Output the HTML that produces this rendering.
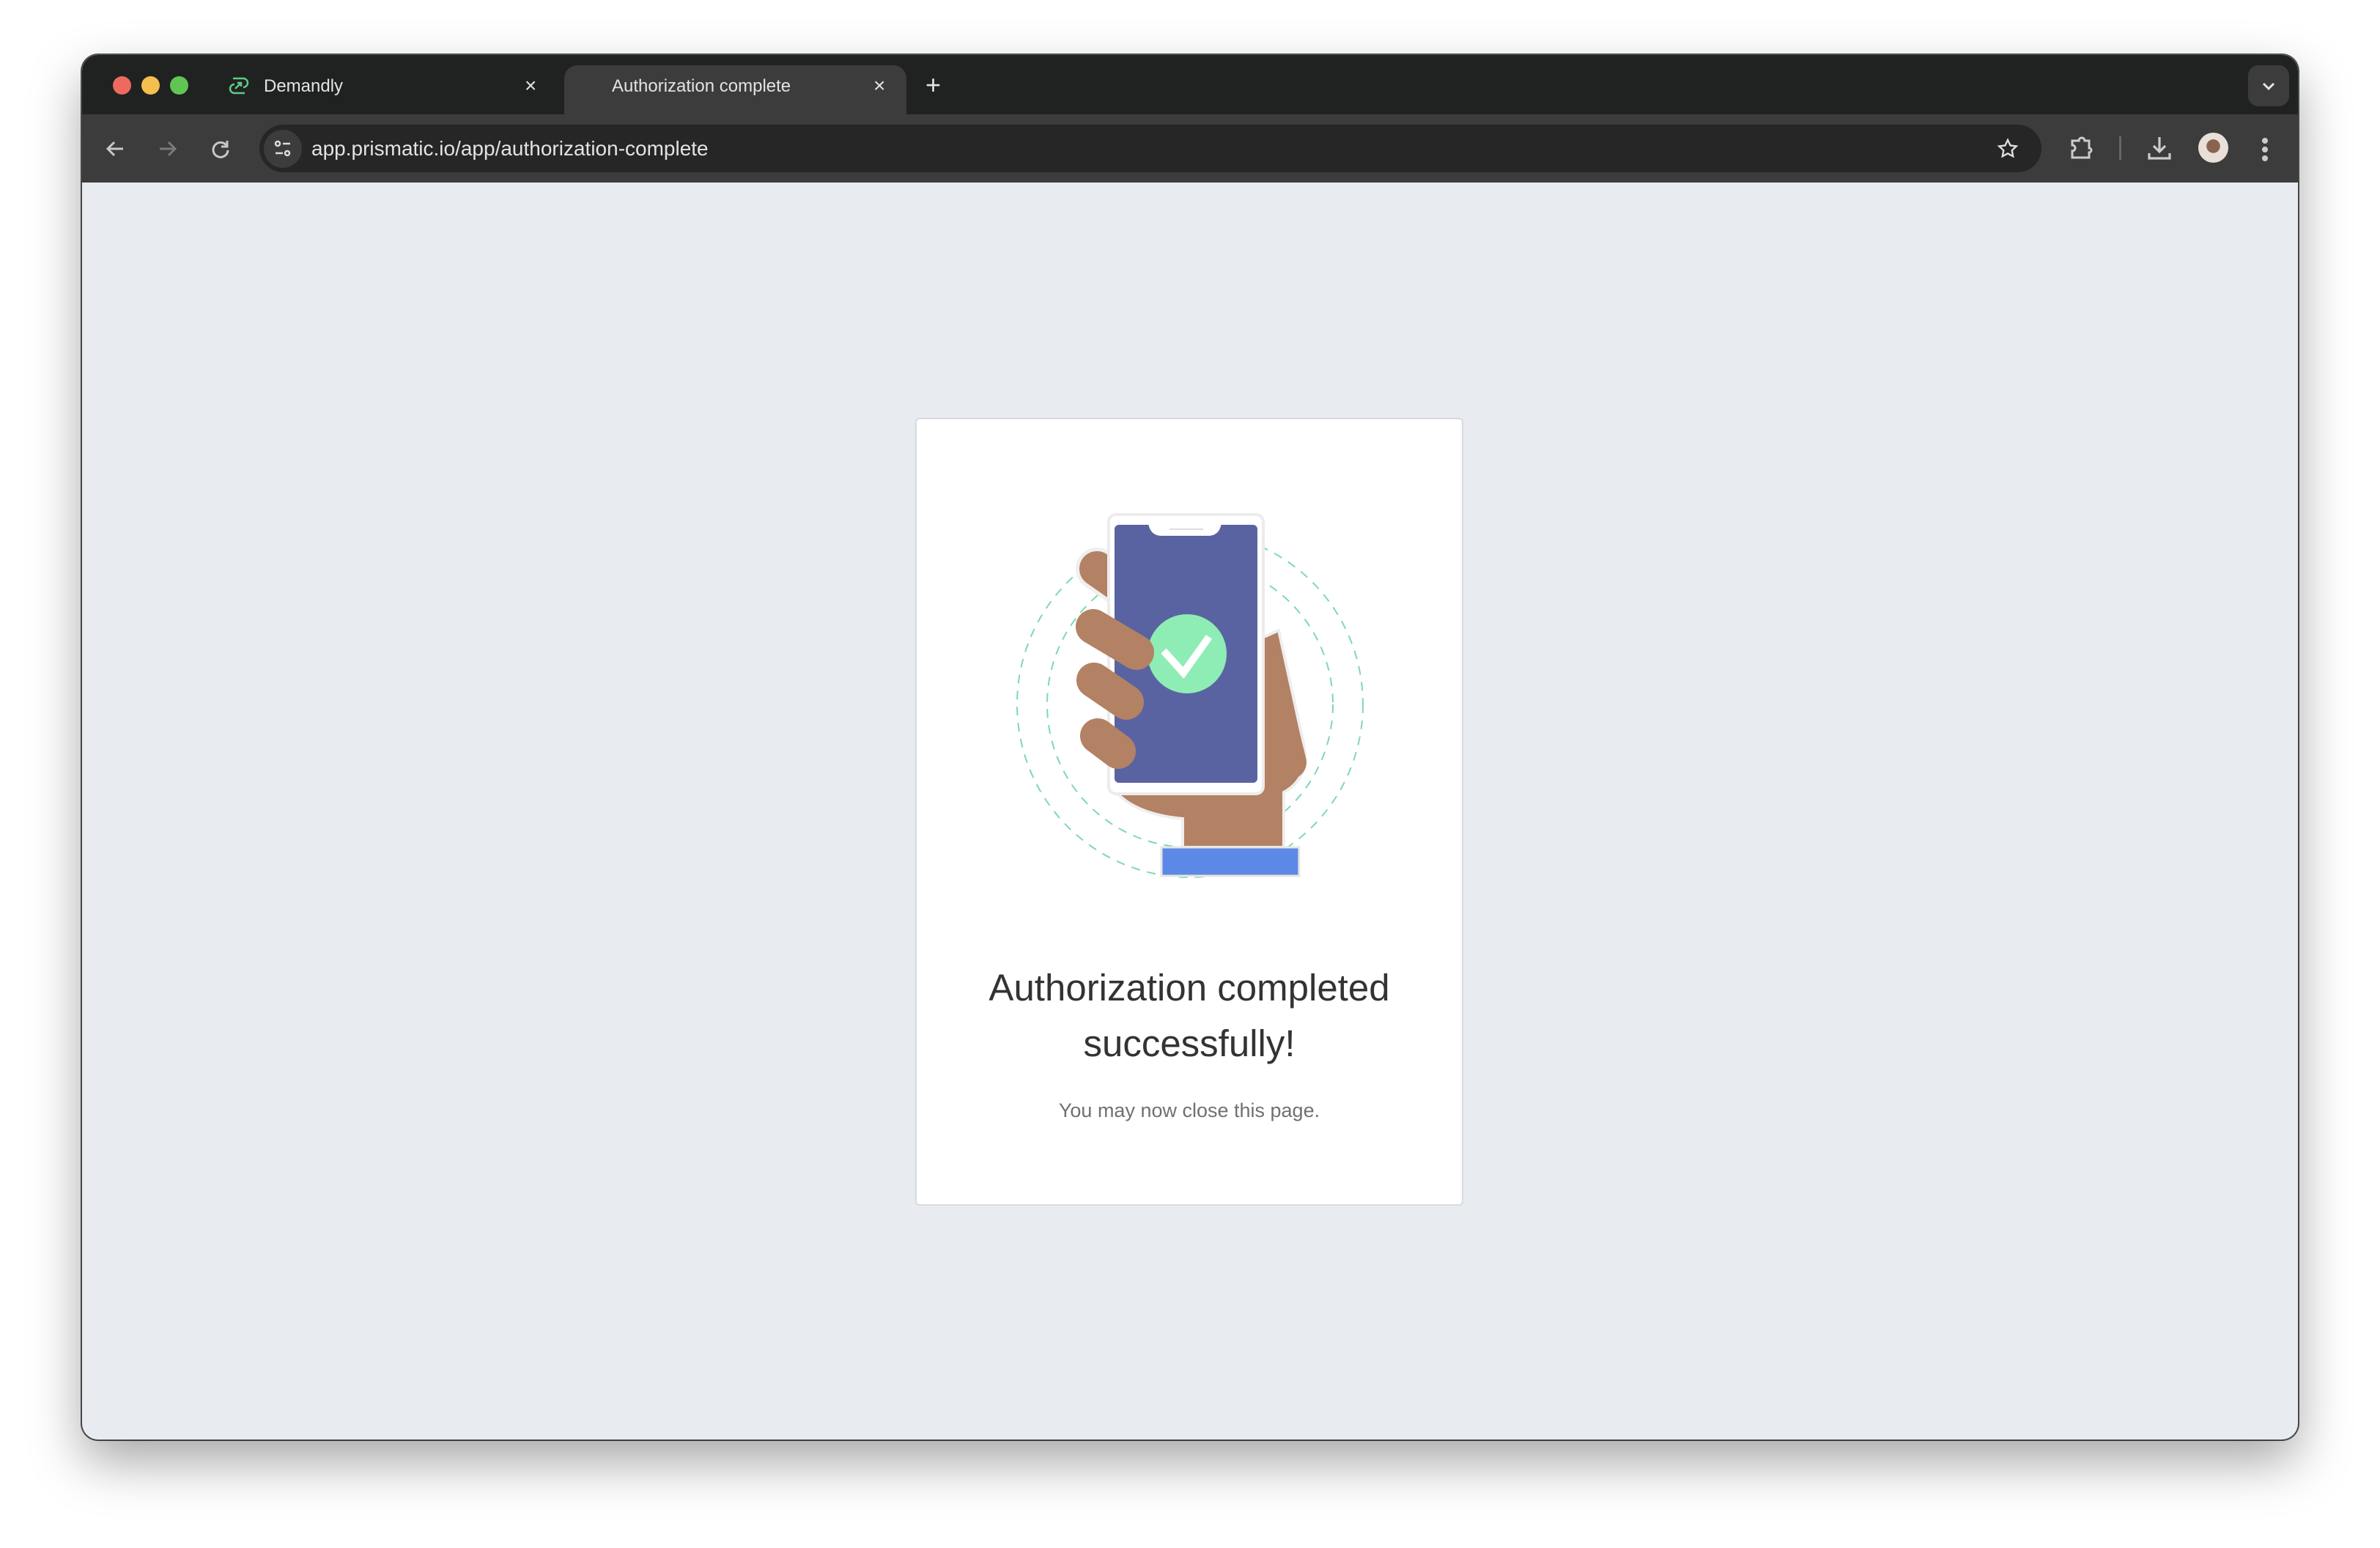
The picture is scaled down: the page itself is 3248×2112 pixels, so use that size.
<!DOCTYPE html>
<html><head><meta charset="utf-8"><style>
*{margin:0;padding:0;box-sizing:border-box}
body{width:3248px;height:2112px;background:#fff;position:relative;overflow:hidden;font-family:"Liberation Sans",sans-serif}
.win{position:absolute;left:112px;top:75px;width:3024px;height:1889px;border-radius:22px;background:#e8ebf0;overflow:hidden;box-shadow:0 30px 70px rgba(0,0,0,.35),0 0 0 2px #555}
.tabbar{position:absolute;left:0;top:0;width:100%;height:81px;background:#202221}
.toolbar{position:absolute;left:0;top:81px;width:100%;height:93px;background:#3c3c3c}
.dot{position:absolute;top:29px;width:25px;height:25px;border-radius:50%}
.tab{position:absolute;top:14px;left:658px;width:467px;height:70px;background:#3c3c3c;border-radius:18px 18px 0 0}
.t{position:absolute;color:#e3e3e3;font-size:24px}
.url{position:absolute;left:242px;top:14px;width:2432px;height:65px;border-radius:33px;background:#262626}
.card{position:absolute;left:1137px;top:495px;width:748px;height:1075px;background:#fff;border:2px solid #d6dae0;border-radius:6px}
.h{position:absolute;left:0;width:100%;text-align:center;color:#333;font-size:51px}
</style></head><body>
<div class="win">
 <div class="tabbar">
  <div class="dot" style="left:42px;background:#ee6a5e"></div>
  <div class="dot" style="left:81px;background:#f5bf4f"></div>
  <div class="dot" style="left:120px;background:#61c554"></div>
  <svg style="position:absolute;left:200px;top:28px" width="28" height="28" viewBox="0 0 28 28" fill="none" stroke="#5fc98a" stroke-width="2.5"><path d="M6 4h14a6 6 0 0 1 0 12M22 24H8a6 6 0 0 1 0-12M9 18l8-8M12 10h5v5"/></svg>
  <div class="t" style="left:248px;top:29px">Demandly</div>
  <div class="t" style="left:604px;top:26px;font-size:28px">×</div>
  <div class="tab"></div>
  <div class="t" style="left:723px;top:29px">Authorization complete</div>
  <div class="t" style="left:1080px;top:26px;font-size:28px">×</div>
  <div class="t" style="left:1151px;top:20px;font-size:36px">+</div>
  <div style="position:absolute;left:2956px;top:14px;width:56px;height:56px;border-radius:14px;background:#3c3c3c"></div>
  <svg style="position:absolute;left:2974px;top:36px" width="20" height="14" viewBox="0 0 20 14"><path d="M3 3l7 7 7-7" stroke="#e3e3e3" stroke-width="3" fill="none"/></svg>
 </div>
 <div class="toolbar">
  <svg style="position:absolute;left:30px;top:32px" width="30" height="30" viewBox="0 0 30 30" fill="none" stroke="#c8c8c8" stroke-width="3"><path d="M26 15H5M14 6l-9 9 9 9"/></svg>
  <svg style="position:absolute;left:102px;top:32px" width="30" height="30" viewBox="0 0 30 30" fill="none" stroke="#7a7a7a" stroke-width="3"><path d="M4 15h21M16 6l9 9-9 9"/></svg>
  <svg style="position:absolute;left:174px;top:32px" width="30" height="30" viewBox="0 0 30 30" fill="none" stroke="#c8c8c8" stroke-width="3"><path d="M24 12A10 10 0 1 0 25 17M24 4v8h-8"/></svg>
  <div class="url">
   <div style="position:absolute;left:6px;top:7px;width:52px;height:52px;border-radius:50%;background:#3c3c3c"></div>
   <svg style="position:absolute;left:19px;top:20px" width="26" height="26" viewBox="0 0 26 26" fill="none" stroke="#ddd" stroke-width="2.5"><circle cx="6" cy="6" r="3"/><path d="M13 6h10M3 19h10"/><circle cx="19" cy="19" r="3"/></svg>
   <div style="position:absolute;left:71px;top:17px;color:#e3e3e3;font-size:28px">app.prismatic.io/app/authorization-complete</div>
   <svg style="position:absolute;left:2370px;top:17px" width="32" height="32" viewBox="0 0 24 24" fill="none" stroke="#ddd" stroke-width="1.8"><path d="M12 3l2.7 5.6 6.1.8-4.5 4.2 1.1 6.1L12 16.8 6.6 19.7l1.1-6.1L3.2 9.4l6.1-.8z"/></svg>
  </div>
  <svg style="position:absolute;left:2712px;top:28px" width="34" height="36" viewBox="0 0 34 36" fill="none" stroke="#ccc" stroke-width="3"><path d="M4 8h9a4 4 0 0 1 8 0h6v10a3 3 0 0 1 0 6v7H4v-9a4 4 0 0 0 0-8z"/></svg>
  <div style="position:absolute;left:2780px;top:30px;width:3px;height:32px;background:#666"></div>
  <svg style="position:absolute;left:2818px;top:28px" width="34" height="36" viewBox="0 0 34 36" fill="none" stroke="#ccc" stroke-width="3.2"><path d="M17 3v20M9 15l8 8 8-8M3 25v7h28v-7"/></svg>
  <div style="position:absolute;left:2888px;top:25px;width:41px;height:41px;border-radius:50%;background:radial-gradient(circle at 50% 45%,#8a6350 0 30%,#e8e0d8 31%)"></div>
  <div style="position:absolute;left:2975px;top:32px;width:8px;height:8px;border-radius:50%;background:#ccc;box-shadow:0 12px 0 #ccc,0 24px 0 #ccc"></div>
 </div>
 <div class="card">
  <svg style="position:absolute;left:-1139px;top:-497px" width="3024" height="1889" viewBox="112 75 3024 1889">
   <g fill="none" stroke="#7fd8b0" stroke-width="2" stroke-dasharray="12 10">
    <circle cx="1624" cy="961" r="236"/><circle cx="1624" cy="961" r="195"/>
   </g>
   <line x1="1497" y1="776" x2="1540" y2="806" stroke="#efefef" stroke-width="58" stroke-linecap="round"/>
   <path d="M1515 1070 Q1540 1110 1614 1117 L1614 1156 L1752 1156 L1752 1081 Q1790 1060 1778 1010 L1745 860 L1700 880 L1720 1070 Z" fill="#b38164" stroke="#eee" stroke-width="4"/>
   <line x1="1497" y1="776" x2="1540" y2="806" stroke="#b38164" stroke-width="48" stroke-linecap="round"/>
   <line x1="1723" y1="893" x2="1760" y2="1040" stroke="#b38164" stroke-width="46" stroke-linecap="round"/>
   <rect x="1513" y="702" width="211" height="381" rx="10" fill="#fff" stroke="#ececec" stroke-width="4"/>
   <rect x="1521" y="716" width="195" height="352" rx="6" fill="#5a63a1"/>
   <path d="M1567 714 Q1570 731 1585 731 L1649 731 Q1664 731 1667 714 Z" fill="#fff"/>
   <line x1="1596" y1="722" x2="1642" y2="722" stroke="#ddd" stroke-width="2"/>
   <circle cx="1620" cy="892" r="54" fill="#8eedb4"/>
   <path d="M1588 888 L1615 918 L1650 869" stroke="#fff" stroke-width="10" fill="none"/>
   <g stroke="#b38164" stroke-width="48" stroke-linecap="round">
    <line x1="1492" y1="855" x2="1551" y2="890"/>
    <line x1="1493" y1="928" x2="1537" y2="958"/>
    <line x1="1498" y1="1004" x2="1526" y2="1025"/>
   </g>
   <rect x="1585" y="1156" width="188" height="39" fill="#5d89e6" stroke="#e6e6e6" stroke-width="3"/>
  </svg>
  <div class="h" style="top:746px">Authorization completed</div>
  <div class="h" style="top:822px">successfully!</div>
  <div style="position:absolute;left:0;width:100%;top:928px;text-align:center;color:#707070;font-size:27px">You may now close this page.</div>
 </div>
</div>
</body></html>
